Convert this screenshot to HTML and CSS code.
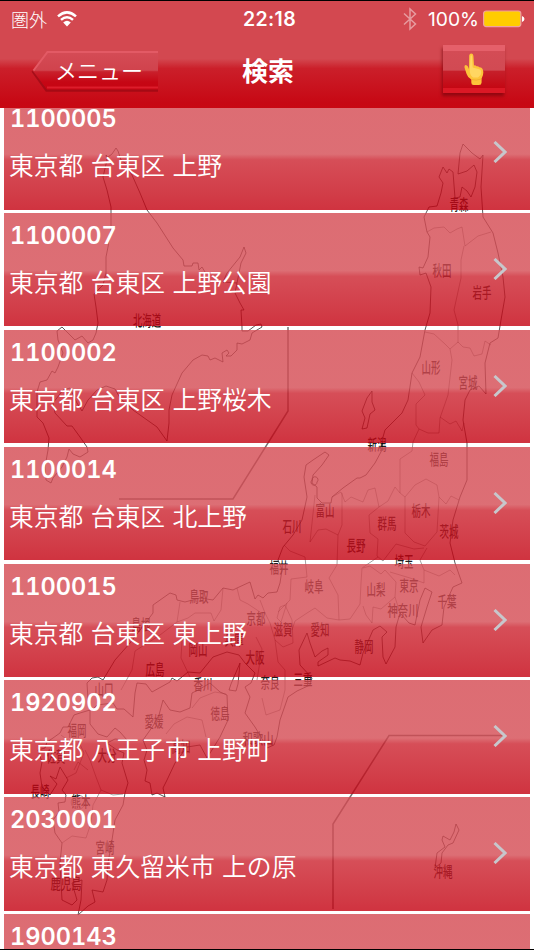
FILE: index.html
```html
<!DOCTYPE html>
<html lang="ja">
<head>
    <meta charset="UTF-8">
    <meta name="viewport" content="width=device-width, initial-scale=1.0">
    <title>検索</title>
    <link rel="stylesheet" href="styles.css">
</head>
<body>
    <div class="screen">
        <!-- 背景の日本地図 -->
        <svg class="map" viewBox="0 0 534 950" aria-hidden="true">
            <g class="coast">
                <!-- 北海道 -->
                <path d="M116 148L112 154L108 157L106 155L107 160L103 177L107 190L111 207L111 227L108 247L106 257L106 273L103 285L94 294L96 307L98 323L96 333L93 340L88 343L82 336L75 340L67 332L62 327L57 331L58 340L63 353L58 367L55 373L52 371L47 380L40 382L37 392L37 417L43 423L49 438L48 450L45 467L46 480L51 483L53 478L62 467L67 457L69 449L73 454L80 457L88 452L87 447L80 437L72 426L67 426L55 413L53 403L63 390L70 388L77 403L82 411L88 400L97 390L106 386L115 389L120 398L133 410L157 427L167 441L169 423L169 410L172 395L182 373L193 360L202 355L208 356L210 360L215 358L223 362L222 353L227 350L229 353L226 356L231 356L237 350L237 343L242 344L250 340L252 333L262 327L261 324L256 325L248 331L242 331L242 327L241 310L244 310L240 303L235 293L237 283L223 282L227 273L240 257L244 247L246 253L241 263L237 283M205 272L202 267L199 270L198 263L193 263L192 266L184 266L183 260L173 248L157 223L147 210L140 193L132 175L125 163L121 160L118 151L116 148"/>
                <!-- 本州 -->
                <path d="M463 144L460 153L458 174L467 171L474 165L477 172L475 187L471 197L467 191L462 187L460 197L455 198L453 172L449 169L447 173L443 167L439 177L443 183L441 193L437 206L429 207L424 217L427 232L430 237L428 257L423 268L419 267L420 275L426 273L431 287L430 313L425 330L420 357L412 373L408 400L402 413L385 430L383 437L382 450L375 463L366 475L360 478L357 478L343 488L332 497L331 503L322 503L317 498L317 487L312 483L313 475L322 465L329 455L325 452L313 460L306 465L304 477L307 497L302 520L293 535L283 547L278 560L282 570L280 583L277 592L268 593L263 598L258 595L255 599L250 582L237 588L233 590L223 588L213 600L200 598L185 602L177 600L176 595L170 593L153 605L153 613L147 621L130 643L115 660L103 680L98 677L92 678L87 683L88 700L92 710L97 705L113 703L117 709L124 709L133 717L135 693L137 683L146 684L152 692L170 682L172 678L177 681L188 672L200 673L213 657L227 652L239 655L245 663L255 673L251 683L245 687L250 697L245 713L255 727L261 737L267 748L274 745L277 737L280 720L288 697L297 691L310 685L312 678L300 665L299 650L307 633L310 643L315 657L322 651L328 648L328 655L318 662L318 666L335 658L340 660L350 661L360 665L363 653L373 630L380 626L387 632L382 637L383 657L386 664L395 647L396 627L400 613L409 623L415 625L420 600L425 588L432 592L427 607L421 627L423 643L432 630L442 625L444 607L453 587L462 583L455 563L450 543L453 520L460 497L467 480L467 443L463 420L465 400L470 390L479 386L486 394L485 363L490 343L498 338L501 320L505 297L503 277L498 253L493 233L483 217L481 187L483 155L480 159L472 153L468 149Z"/>
                <!-- 佐渡・淡路 -->
                <path d="M372 391L367 398L362 411L365 418L362 429L367 428L370 414L375 410L372 402ZM312 480a3 3 0 1 0 5 2a3 3 0 1 0-5-2M240 663L231 684L229 690L236 691L238 684Z"/>
                <!-- 四国 -->
                <path d="M143 740L153 726L159 715L163 700L170 710L180 712L190 708L192 693L200 689L210 683L220 692L227 695L228 720L220 737L207 758L200 745L187 747L175 763L167 780L163 788L165 797L157 793L152 795L150 783L145 781L147 770L144 760L147 750Z"/>
                <!-- 九州 -->
                <path d="M90 710L80 713L74 715L68 727L63 727L60 733L53 738L47 742L45 748L38 750L42 762L40 773L42 787L50 795L57 784L50 776L56 779L60 767L68 780L62 790L66 795L65 802L58 803L59 812L53 820L55 833L62 843L60 863L62 900L72 905L77 900L72 883L82 880L81 900L78 915L88 906L95 902L92 890L103 892L107 880L108 863L112 840L115 820L123 805L125 793L128 783L122 763L124 753L117 750L107 743L115 739L127 740L120 732L115 728L107 737L98 734L90 724Z"/>
                <!-- 沖縄 -->
                <path d="M456 824L459 830L453 843L448 845L442 853L441 863L435 868L437 853L445 847L442 840L443 836L450 840L454 832Z"/>
            </g>
            <!-- 県境 -->
            <g class="border">
                <path d="M427 232L434 228L444 227L450 233L457 229L462 227L465 246L478 236L491 232M464 246L461 260L461 278L454 310L458 325L458 343M425 332L434 334L445 344L450 349L458 342L463 347L470 348L474 356L482 354L485 341L491 345M450 349L452 360L448 395L440 418L439 433L428 433L419 429L413 442L412 451L400 459L400 493L395 487L388 501L379 507M412 373L419 382L425 395L416 404L416 425L419 429M440 417L450 424L456 421L462 431L464 423"/>
                <path d="M400 493L405 497L415 485L426 479L437 485L439 497L437 532L425 546L414 542L405 533L405 510L405 497M439 497L446 504L451 496L459 500M332 497L341 492L345 502L351 497L363 502L368 490L375 488L379 507L369 515L370 533L378 539L377 556L383 561L396 544L414 549L424 548M342 493L342 525L338 535L326 529L318 530L310 542L315 495M338 535L337 565L329 578L338 595L339 620L327 618L315 608L307 613L295 621L292 630M284 545L290 551L305 557L307 577L291 579L290 600L278 612M378 557L362 568L361 583L360 604L350 619L339 620M363 568L370 566L381 574L385 570L396 582L395 597L381 609L373 607L372 623L366 615L363 606M390 572L410 578L424 583L424 570L420 560L427 548M424 570L439 576L450 570L455 575M400 613L395 597"/>
                <path d="M260 600L265 613L270 623L275 640L283 647L293 643L292 620L285 605L280 607L277 618L281 622L287 603M260 612L248 604L240 600L237 588M223 588L221 610L214 621L211 613L195 613L188 618L177 622L180 602M185 621L182 641L181 658L190 677M177 622L160 635L135 651L132 670L121 690M256 637L262 649L257 680M275 640L278 662L285 670L285 690L280 710L266 715L262 698M192 708L200 698L215 692L226 694M166 734L174 724L187 717L202 720L206 737M61 735L70 742L78 740L84 753L76 773L66 778M85 750L90 760L96 777L101 790L113 795L123 794M101 790L93 805L91 823L86 838L72 836L62 843M74 770L78 762L88 770M75 796a7 7 0 1 1-3 3"/>
            </g>
            <path class="frame" d="M288 327V411L233 499H119M506 735.500H389L333 824V909"/>
            <g class="labels">
                <text x="147" y="326" textLength="28" lengthAdjust="spacingAndGlyphs">北海道</text>
                <text x="459" y="210" textLength="19" lengthAdjust="spacingAndGlyphs">青森</text>
                <text x="442" y="276" textLength="19" lengthAdjust="spacingAndGlyphs">秋田</text>
                <text x="482" y="298" textLength="19" lengthAdjust="spacingAndGlyphs">岩手</text>
                <text x="431" y="373" textLength="19" lengthAdjust="spacingAndGlyphs">山形</text>
                <text x="468" y="388" textLength="19" lengthAdjust="spacingAndGlyphs">宮城</text>
                <text x="377" y="450" textLength="19" lengthAdjust="spacingAndGlyphs">新潟</text>
                <text x="439" y="465" textLength="19" lengthAdjust="spacingAndGlyphs">福島</text>
                <text x="325" y="516" textLength="19" lengthAdjust="spacingAndGlyphs">富山</text>
                <text x="292" y="532" textLength="19" lengthAdjust="spacingAndGlyphs">石川</text>
                <text x="421" y="516" textLength="19" lengthAdjust="spacingAndGlyphs">栃木</text>
                <text x="387" y="529" textLength="19" lengthAdjust="spacingAndGlyphs">群馬</text>
                <text x="449" y="537" textLength="19" lengthAdjust="spacingAndGlyphs">茨城</text>
                <text x="356" y="551" textLength="19" lengthAdjust="spacingAndGlyphs">長野</text>
                <text x="404" y="567" textLength="19" lengthAdjust="spacingAndGlyphs">埼玉</text>
                <text x="279" y="573" textLength="19" lengthAdjust="spacingAndGlyphs">福井</text>
                <text x="314" y="592" textLength="19" lengthAdjust="spacingAndGlyphs">岐阜</text>
                <text x="376" y="595" textLength="19" lengthAdjust="spacingAndGlyphs">山梨</text>
                <text x="409" y="591" textLength="19" lengthAdjust="spacingAndGlyphs">東京</text>
                <text x="403" y="616" textLength="31" lengthAdjust="spacingAndGlyphs">神奈川</text>
                <text x="447" y="607" textLength="19" lengthAdjust="spacingAndGlyphs">千葉</text>
                <text x="283" y="635" textLength="19" lengthAdjust="spacingAndGlyphs">滋賀</text>
                <text x="320" y="635" textLength="19" lengthAdjust="spacingAndGlyphs">愛知</text>
                <text x="364" y="652" textLength="19" lengthAdjust="spacingAndGlyphs">静岡</text>
                <text x="303" y="685" textLength="19" lengthAdjust="spacingAndGlyphs">三重</text>
                <text x="270" y="688" textLength="19" lengthAdjust="spacingAndGlyphs">奈良</text>
                <text x="258" y="744" textLength="31" lengthAdjust="spacingAndGlyphs">和歌山</text>
                <text x="255" y="663" textLength="19" lengthAdjust="spacingAndGlyphs">大阪</text>
                <text x="256" y="624" textLength="19" lengthAdjust="spacingAndGlyphs">京都</text>
                <text x="234" y="645" textLength="19" lengthAdjust="spacingAndGlyphs">兵庫</text>
                <text x="199" y="602" textLength="19" lengthAdjust="spacingAndGlyphs">鳥取</text>
                <text x="141" y="630" textLength="19" lengthAdjust="spacingAndGlyphs">島根</text>
                <text x="198" y="655" textLength="19" lengthAdjust="spacingAndGlyphs">岡山</text>
                <text x="155" y="675" textLength="19" lengthAdjust="spacingAndGlyphs">広島</text>
                <text x="104" y="695" textLength="19" lengthAdjust="spacingAndGlyphs">山口</text>
                <text x="203" y="690" textLength="19" lengthAdjust="spacingAndGlyphs">香川</text>
                <text x="220" y="719" textLength="19" lengthAdjust="spacingAndGlyphs">徳島</text>
                <text x="154" y="727" textLength="19" lengthAdjust="spacingAndGlyphs">愛媛</text>
                <text x="181" y="752" textLength="19" lengthAdjust="spacingAndGlyphs">高知</text>
                <text x="77" y="736" textLength="19" lengthAdjust="spacingAndGlyphs">福岡</text>
                <text x="56" y="762" textLength="19" lengthAdjust="spacingAndGlyphs">佐賀</text>
                <text x="107" y="761" textLength="19" lengthAdjust="spacingAndGlyphs">大分</text>
                <text x="40" y="797" textLength="19" lengthAdjust="spacingAndGlyphs">長崎</text>
                <text x="81" y="807" textLength="19" lengthAdjust="spacingAndGlyphs">熊本</text>
                <text x="105" y="853" textLength="19" lengthAdjust="spacingAndGlyphs">宮崎</text>
                <text x="66" y="889" textLength="31" lengthAdjust="spacingAndGlyphs">鹿児島</text>
                <text x="443" y="877" textLength="19" lengthAdjust="spacingAndGlyphs">沖縄</text>
            </g>
        </svg>

        <header class="header">
            <div class="status">
                <div class="status-left">
                    <span class="carrier">圏外</span>
                    <svg width="20" height="16" viewBox="0 0 20 16">
                        <path d="M1 5.4Q10-2.6 19 5.4M4 8.9Q10 3.6 16 8.9" fill="none" stroke="#fff" stroke-width="2.5"/>
                        <path d="M6.2 11.5Q10 8.2 13.8 11.5L10 15.4Z" fill="#fff"/>
                    </svg>
                </div>
                <span class="time">22:18</span>
                <div class="status-right">
                    <svg class="bluetooth" width="14" height="24" viewBox="0 0 14 24">
                        <path d="M1 6.5L12.5 17L7 22V2L12.5 7L1 17.5" fill="none" stroke="#fff" stroke-width="1.5"/>
                    </svg>
                    <span class="percent">100%</span>
                    <svg width="42" height="18" viewBox="0 0 42 18">
                        <rect x=".6" y="1" width="37.2" height="15.6" rx="2.5" fill="#fc0" stroke="#f0a0a0" stroke-width="1.2"/>
                        <path d="M39 6Q41.5 7 41.5 9T39 12Z" fill="#fff"/>
                    </svg>
                </div>
            </div>
            <div class="navbar">
                <a class="back" href="#">
                    <svg class="back-shape" width="128" height="44" viewBox="0 0 128 44">
                        <defs>
                            <linearGradient id="backFill" x1="0" y1="0" x2="0" y2="1">
                                <stop offset="0" stop-color="#d54c56"/>
                                <stop offset=".5" stop-color="#d0434d"/>
                                <stop offset=".54" stop-color="#c9202c"/>
                                <stop offset=".8" stop-color="#c60715"/>
                                <stop offset="1" stop-color="#c60412"/>
                            </linearGradient>
                        </defs>
                        <path d="M127 40.500H15.500L1.500 21" fill="none" stroke="#8d0711" stroke-width="2.500" opacity=".6"/>
                        <path d="M2 21L16 1H127V39.500H16Z" fill="url(#backFill)"/>
                        <path d="M2.500 20.500L16.500 2H127" fill="none" stroke="#e35a65" stroke-width="2"/>
                        <path d="M16 37.500H127" stroke="#dc1d2b" stroke-width="2"/>
                    </svg>
                    <span class="back-text">メニュー</span>
                </a>
                <h1>検索</h1>
                <button class="point" type="button" aria-label="地図から選択">
                    <svg width="20" height="33" viewBox="0 0 20 33">
                        <path d="M5.200 2.500Q5.500.5 7.300.5T9.400 2.800L10 12.500Q11.500 12 12.500 13.300Q14.300 12.800 15.300 14.300Q17.500 14 18.600 16Q19.800 18.500 19 22L17.600 25.500V29.500Q17.500 32 15 32H9.500Q7.300 32 7.300 29.500V26.500Q3.600 24.500 2.600 21L.5 14.500Q0 11.800 2 12Q4 12.500 5 16Z" fill="#fdc43a"/>
                        <path d="M6.500 3Q7.300 1.500 8 3L8.700 14.500L16 16.500Q18.200 18.500 16.500 22L14 24.500H9Q5.500 22 5.800 17Z" fill="#ffd662"/>
                        <path d="M7.500 26.500Q12 28 17.300 26" fill="none" stroke="#eda92c" stroke-width=".8"/>
                    </svg>
                </button>
            </div>
        </header>

        <main class="results">
            <ul class="list">
                <li class="row">
                    <div><p class="zip">1100005</p><p class="address">東京都 台東区 上野</p></div>
                    <svg class="chevron" viewBox="0 0 14 22"><path d="M1.500 1L12 11L1.500 21"/></svg>
                </li>
                <li class="row">
                    <div><p class="zip">1100007</p><p class="address">東京都 台東区 上野公園</p></div>
                    <svg class="chevron" viewBox="0 0 14 22"><path d="M1.500 1L12 11L1.500 21"/></svg>
                </li>
                <li class="row">
                    <div><p class="zip">1100002</p><p class="address">東京都 台東区 上野桜木</p></div>
                    <svg class="chevron" viewBox="0 0 14 22"><path d="M1.500 1L12 11L1.500 21"/></svg>
                </li>
                <li class="row">
                    <div><p class="zip">1100014</p><p class="address">東京都 台東区 北上野</p></div>
                    <svg class="chevron" viewBox="0 0 14 22"><path d="M1.500 1L12 11L1.500 21"/></svg>
                </li>
                <li class="row">
                    <div><p class="zip">1100015</p><p class="address">東京都 台東区 東上野</p></div>
                    <svg class="chevron" viewBox="0 0 14 22"><path d="M1.500 1L12 11L1.500 21"/></svg>
                </li>
                <li class="row">
                    <div><p class="zip">1920902</p><p class="address">東京都 八王子市 上野町</p></div>
                    <svg class="chevron" viewBox="0 0 14 22"><path d="M1.500 1L12 11L1.500 21"/></svg>
                </li>
                <li class="row">
                    <div><p class="zip">2030001</p><p class="address">東京都 東久留米市 上の原</p></div>
                    <svg class="chevron" viewBox="0 0 14 22"><path d="M1.500 1L12 11L1.500 21"/></svg>
                </li>
                <li class="row">
                    <div><p class="zip">1900143</p></div>
                </li>
            </ul>
        </main>
    </div>
</body>
</html>
```
FILE: styles.css
```css
* {
    box-sizing: border-box;
}
body {
    margin: 0;
    font-family: Inter, "Noto Sans CJK JP", sans-serif;
    color: #fff;
    background-color: #fff;
}
.screen {
    position: relative;
    display: flex;
    flex-direction: column;
    width: 534px;
    height: 950px;
    border-top: 1px solid #000;
    border-bottom: 1px solid #000;
    overflow: hidden;
}

/* Mapa */
.map {
    position: absolute;
    top: -1px;
    left: 0;
    width: 534px;
    height: 950px;
}
.coast path {
    fill: none;
    stroke: #000;
    stroke-opacity: .65;
    stroke-width: 1;
}
.border path {
    fill: none;
    stroke: #000;
    stroke-opacity: .4;
    stroke-width: .9;
}
.frame {
    fill: none;
    stroke: #000;
    stroke-opacity: .55;
    stroke-width: 1.5;
}
.labels text {
    font-family: "Noto Sans CJK JP", sans-serif;
    font-size: 15px;
    font-weight: 500;
    text-anchor: middle;
    fill: #000;
    fill-opacity: .9;
}

/* Header */
.header {
    position: relative;
    flex: none;
    height: 107px;
    background: linear-gradient(#d34850 0, #d34850 54%, #cb1f2a 63%, #c70814 95%, #c80813 100%);
}
.status {
    display: grid;
    grid-template-columns: 1fr auto 1fr;
    align-items: center;
    height: 35px;
    padding: 0 10px 0 11px;
}
.status-left, .status-right {
    display: flex;
    align-items: center;
}
.status-left {
    gap: 10px;
}
.status-right {
    justify-content: flex-end;
}
.carrier {
    font-family: "Noto Sans CJK JP", sans-serif;
    font-size: 18px;
    font-weight: 300;
    line-height: 24px;
}
.time {
    padding-left: 4px;
    font-size: 19.5px;
    font-weight: 600;
    letter-spacing: .4px;
}
.bluetooth {
    margin-right: 11px;
    opacity: .45;
}
.percent {
    margin-right: 4px;
    font-size: 19.3px;
}
.status-right svg:last-child {
    margin-right: -1px;
}
.navbar {
    display: grid;
    grid-template-columns: 1fr auto 1fr;
    align-items: center;
    height: 70px;
    padding: 0 29px 0 31px;
}
.back {
    position: relative;
    width: 128px;
    height: 44px;
    color: #fff;
    text-decoration: none;
}
.back-shape {
    position: absolute;
    top: 1px;
    left: 0;
}
.back-text {
    position: relative;
    display: block;
    padding-left: 24px;
    font-family: "Noto Sans CJK JP", sans-serif;
    font-size: 22px;
    font-weight: 350;
    line-height: 41px;
    white-space: nowrap;
}
h1 {
    margin: 0;
    padding-bottom: 2px;
    font-family: "Noto Sans CJK JP", sans-serif;
    font-size: 26px;
    font-weight: 700;
    line-height: 36px;
}
.point {
    display: flex;
    align-items: center;
    justify-content: center;
    justify-self: end;
    width: 62px;
    height: 48px;
    margin-bottom: 4px;
    padding: 0;
    border: 0;
    border-top: 6px solid #e5606a;
    border-bottom: 5px solid #db1825;
    background: linear-gradient(#d44c55 0, #d14a53 52%, #c6202b 54%, #c40713 100%);
    box-shadow: -1px 3px 3px rgba(110, 0, 8, .6);
}

/* Resultados */
.results {
    flex: 1;
    min-height: 0;
    overflow: hidden;
}
.list {
    position: relative;
    display: flex;
    flex-direction: column;
    gap: 3.4px;
    margin: -11.8px 0 0;
    padding: 0 4px;
    list-style: none;
}
.row {
    display: flex;
    justify-content: space-between;
    flex: none;
    height: 113.45px;
    padding: 8px 23px 0 5px;
    background: linear-gradient(rgba(212, 72, 80, .8) 0, rgba(212, 74, 82, .8) 51%, rgba(204, 34, 46, .8) 56%, rgba(198, 12, 26, .8) 86%, rgba(196, 0, 16, .8) 100%);
}
.row p {
    margin: 0;
}
.zip {
    padding: 1px 0 0 1px;
    font-size: 23.6px;
    font-weight: 600;
    line-height: 28px;
    font-variant-numeric: tabular-nums;
}
.row .address {
    margin-top: 13px;
    font-family: "Noto Sans CJK JP", sans-serif;
    font-size: 24.8px;
    font-weight: 350;
    line-height: 36px;
    word-spacing: 1.8px;
}
.chevron {
    width: 14px;
    height: 22px;
    margin-top: 37px;
}
.chevron path {
    fill: none;
    stroke: #c7c7cc;
    stroke-width: 3;
}
```
